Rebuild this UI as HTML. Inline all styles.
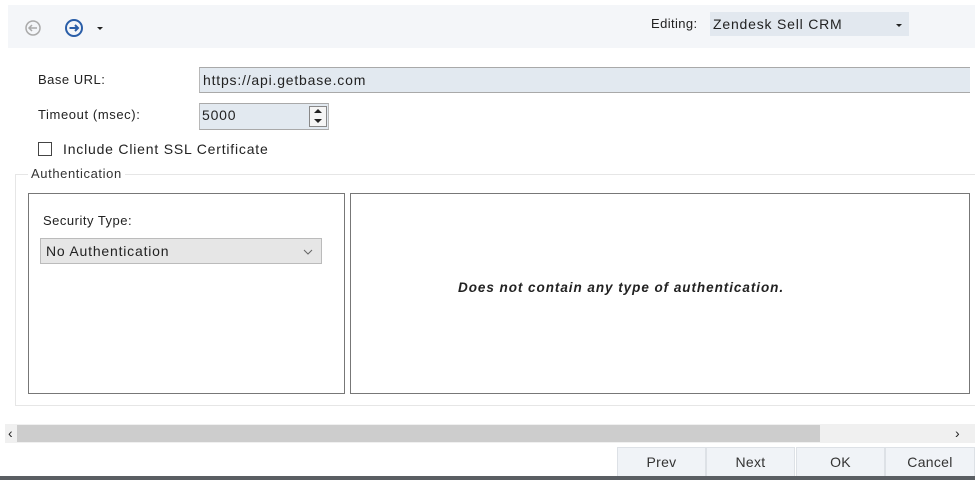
<!DOCTYPE html>
<html><head><meta charset="utf-8"><style>
*{box-sizing:border-box;margin:0;padding:0}
body{width:975px;height:480px;position:relative;background:#fff;font-family:"Liberation Sans",sans-serif;font-size:14px;letter-spacing:0.8px;color:#222;overflow:hidden}
.a{position:absolute;white-space:nowrap}
.inp{background:#e2e9f0;border-top:1px solid #a9a9a9;border-bottom:1px solid #a9a9a9;border-left:1px solid #b8b8b8}
.btn{position:absolute;top:447px;height:30px;width:89px;background:#f0f3f7;border:1px solid #dde1e6;text-align:center;line-height:29px;font-size:14px;letter-spacing:0.3px;color:#333}
</style></head><body>
<div class="a" style="left:8px;top:5px;width:967px;height:43px;background:#f4f6f9"></div>
<svg class="a" style="left:24px;top:19px" width="18" height="18" viewBox="0 0 18 18"><circle cx="9" cy="9" r="7" fill="none" stroke="#aaa" stroke-width="1.5"/><path d="M13 9H5M8 6L5 9l3 3" fill="none" stroke="#aaa" stroke-width="1.5"/></svg>
<svg class="a" style="left:64px;top:18px" width="20" height="20" viewBox="0 0 20 20"><circle cx="10" cy="10" r="8" fill="none" stroke="#2a5ea8" stroke-width="2"/><path d="M5.5 10H14M11 7l3 3-3 3" fill="none" stroke="#2a5ea8" stroke-width="2"/></svg>
<div class="a" style="left:97px;top:27px;width:0;height:0;border-left:3px solid transparent;border-right:3px solid transparent;border-top:3px solid #222"></div>
<div class="a" style="left:651px;top:16px;font-size:13px;letter-spacing:0.4px">Editing:</div>
<div class="a" style="left:710px;top:12px;width:199px;height:24px;background:#e2e8ef"></div>
<div class="a" style="left:713px;top:16px">Zendesk Sell CRM</div>
<div class="a" style="left:896px;top:24px;width:0;height:0;border-left:3px solid transparent;border-right:3px solid transparent;border-top:3px solid #222"></div>

<div class="a" style="left:38px;top:72px;font-size:13px;letter-spacing:0.5px">Base URL:</div>
<div class="a inp" style="left:199px;top:67px;width:771px;height:26px"></div>
<div class="a" style="left:203px;top:72px">https://api.getbase.com</div>
<div class="a" style="left:38px;top:107px;font-size:13px;letter-spacing:0.6px">Timeout (msec):</div>
<div class="a inp" style="left:199px;top:103px;width:130px;height:27px;border-right:1px solid #b8b8b8"></div>
<div class="a" style="left:202px;top:107px">5000</div>
<div class="a" style="left:309px;top:106px;width:18px;height:21px;background:#f5f5f5;border:1px solid #888"></div>
<div class="a" style="left:314px;top:109px;border-left:4px solid transparent;border-right:4px solid transparent;border-bottom:4px solid #222"></div>
<div class="a" style="left:314px;top:119px;border-left:4px solid transparent;border-right:4px solid transparent;border-top:4px solid #222"></div>
<div class="a" style="left:38px;top:142px;width:14px;height:14px;border:1px solid #444"></div>
<div class="a" style="left:63px;top:141px">Include Client SSL Certificate</div>

<div class="a" style="left:15px;top:174px;width:960px;height:232px;border:1px solid #e6e6e6;border-right:none"></div>
<div class="a" style="left:28px;top:166px;background:#fff;padding:0 3px;color:#333;font-size:13px;letter-spacing:0.6px">Authentication</div>
<div class="a" style="left:28px;top:193px;width:317px;height:201px;border:1px solid #777"></div>
<div class="a" style="left:43px;top:213px;font-size:13px;letter-spacing:0.5px">Security Type:</div>
<div class="a" style="left:40px;top:238px;width:282px;height:26px;background:#e6e6e6;border:1px solid #bbb"></div>
<div class="a" style="left:46px;top:243px">No Authentication</div>
<svg class="a" style="left:303px;top:249px" width="10" height="6"><path d="M1 1l4 4 4-4" fill="none" stroke="#666"/></svg>
<div class="a" style="left:350px;top:193px;width:620px;height:201px;border:1px solid #777"></div>
<div class="a" style="left:458px;top:280px;font-style:italic;font-weight:bold;font-size:13.5px;letter-spacing:0.95px">Does not contain any type of authentication.</div>

<div class="a" style="left:5px;top:424px;width:970px;height:19px;background:#f0f0f0"></div>
<div class="a" style="left:17px;top:425px;width:803px;height:17px;background:#cdcdcd"></div>
<div class="a" style="left:8px;top:425px;font-size:14px">&#8249;</div>
<div class="a" style="left:955px;top:425px;font-size:14px">&#8250;</div>

<div class="btn" style="left:617px">Prev</div>
<div class="btn" style="left:706px">Next</div>
<div class="btn" style="left:796px">OK</div>
<div class="btn" style="left:885px;width:90px">Cancel</div>
<div class="a" style="left:0;top:476px;width:975px;height:4px;background:#5a5e63"></div>
</body></html>
